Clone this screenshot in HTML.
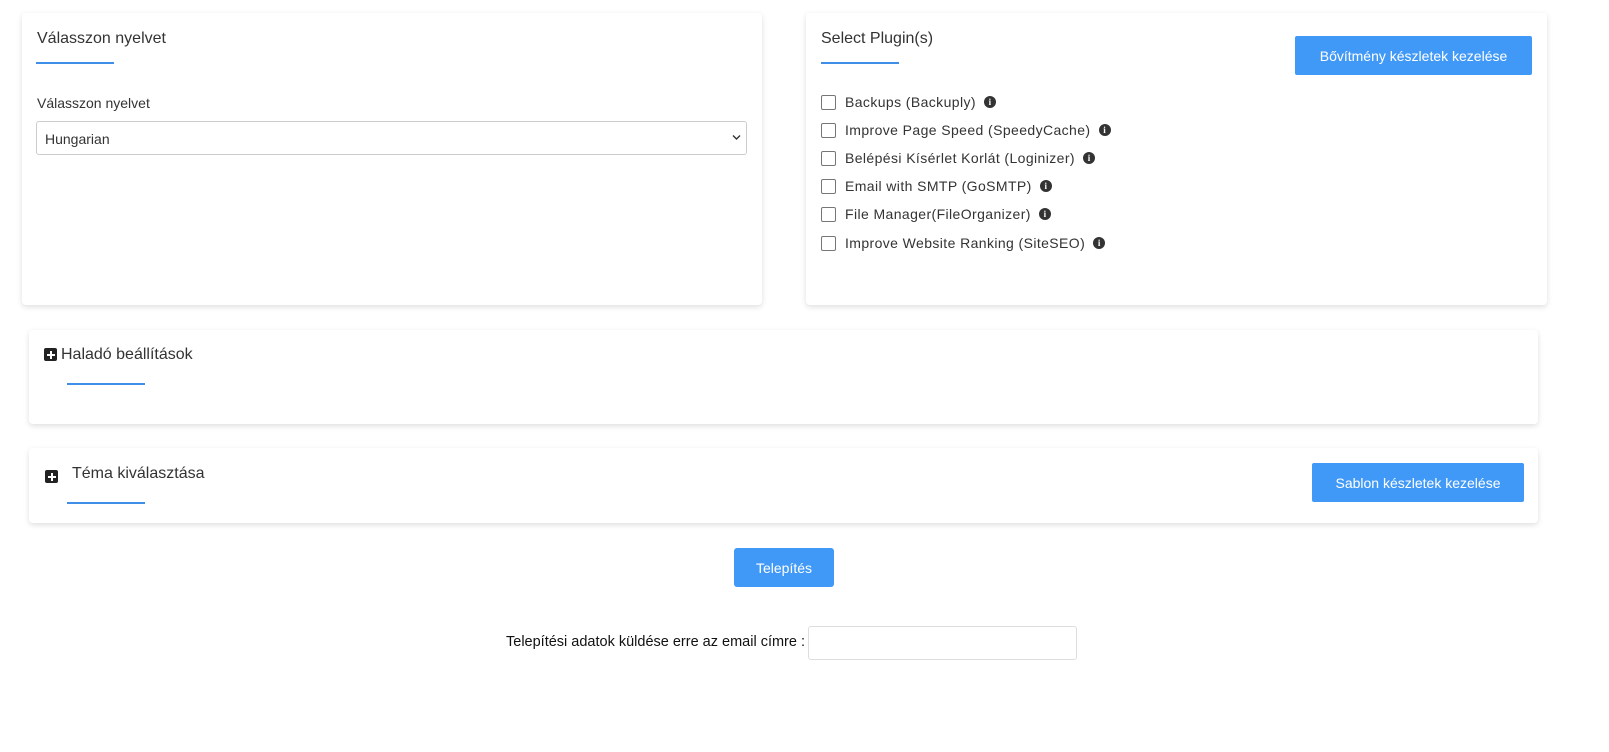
<!DOCTYPE html>
<html><head><meta charset="utf-8"><style>
*{box-sizing:border-box;margin:0;padding:0}
body{width:1609px;height:752px;background:#fff;font-family:"Liberation Sans",sans-serif;color:#333;position:relative;overflow:hidden}
.card{position:absolute;background:#fff;border-radius:4px;box-shadow:0 2px 6px rgba(0,0,0,.13)}
.abs{position:absolute}
.t{font-size:16px;color:#333;white-space:nowrap}
.ul{position:absolute;height:2px;width:78px;background:#3f8fe8}
.btn{position:absolute;background:#4199f7;color:#fff;font-size:14px;display:flex;align-items:center;justify-content:center;border-radius:2px}
.row{position:absolute;left:821px;display:flex;align-items:center;font-size:14px;letter-spacing:0.4px;color:#333;white-space:nowrap}
.cb{width:15px;height:15px;border:1.5px solid #767676;border-radius:2px;margin-right:9px}
.info{width:12px;height:12px;border-radius:50%;background:#333;color:#fff;font-size:9px;font-weight:bold;font-family:"Liberation Serif",serif;display:inline-flex;align-items:center;justify-content:center;margin-left:8px;letter-spacing:0}
.plus{position:absolute;width:13px;height:13px;background:#222;border-radius:2px}
.plus:before{content:"";position:absolute;left:5.5px;top:2.5px;width:2px;height:8px;background:#fff}
.plus:after{content:"";position:absolute;left:2.5px;top:5.5px;width:8px;height:2px;background:#fff}
</style></head><body>
<div class="card" style="left:22px;top:13px;width:740px;height:292px"></div>
<div class="card" style="left:806px;top:13px;width:741px;height:292px"></div>
<div class="card" style="left:29px;top:330px;width:1509px;height:94px"></div>
<div class="card" style="left:29px;top:448px;width:1509px;height:75px"></div>

<div class="abs t" style="left:37px;top:30px">Válasszon nyelvet</div>
<div class="ul" style="left:36px;top:62px"></div>
<div class="abs" style="left:37px;top:95px;font-size:14px">Válasszon nyelvet</div>
<div class="abs" style="left:36px;top:121px;width:711px;height:34px;border:1px solid #ccc;border-radius:3px;font-size:14px;padding:9px 0 0 8px">Hungarian
<svg style="position:absolute;right:5px;top:12px" width="9" height="7" viewBox="0 0 9 7"><path d="M1 1.5l3.5 3.5 3.5-3.5" stroke="#333" stroke-width="1.4" fill="none"/></svg></div>

<div class="abs t" style="left:821px;top:30px">Select Plugin(s)</div>
<div class="ul" style="left:821px;top:62px"></div>
<div class="btn" style="left:1295px;top:36px;width:237px;height:39px">Bővítmény készletek kezelése</div>

<div class="row" style="top:94px"><span class="cb"></span>Backups (Backuply)<span class="info">i</span></div>
<div class="row" style="top:122px"><span class="cb"></span>Improve Page Speed (SpeedyCache)<span class="info">i</span></div>
<div class="row" style="top:150px"><span class="cb"></span>Belépési Kísérlet Korlát (Loginizer)<span class="info">i</span></div>
<div class="row" style="top:178px"><span class="cb"></span>Email with SMTP (GoSMTP)<span class="info">i</span></div>
<div class="row" style="top:206px"><span class="cb"></span>File Manager(FileOrganizer)<span class="info">i</span></div>
<div class="row" style="top:235px"><span class="cb"></span>Improve Website Ranking (SiteSEO)<span class="info">i</span></div>

<div class="plus" style="left:44px;top:348px"></div>
<div class="abs t" style="left:61px;top:346px">Haladó beállítások</div>
<div class="ul" style="left:67px;top:383px"></div>

<div class="plus" style="left:45px;top:470px"></div>
<div class="abs t" style="left:72px;top:465px">Téma kiválasztása</div>
<div class="ul" style="left:67px;top:502px"></div>
<div class="btn" style="left:1312px;top:463px;width:212px;height:39px">Sablon készletek kezelése</div>

<div class="btn" style="left:734px;top:548px;width:100px;height:39px;border-radius:3px">Telepítés</div>
<div class="abs" style="left:300px;width:505px;text-align:right;top:634px;font-size:14.5px;color:#111;white-space:nowrap">Telepítési adatok küldése erre az email címre :</div>
<div class="abs" style="left:808px;top:626px;width:269px;height:34px;border:1px solid #ddd;border-radius:3px"></div>
</body></html>
